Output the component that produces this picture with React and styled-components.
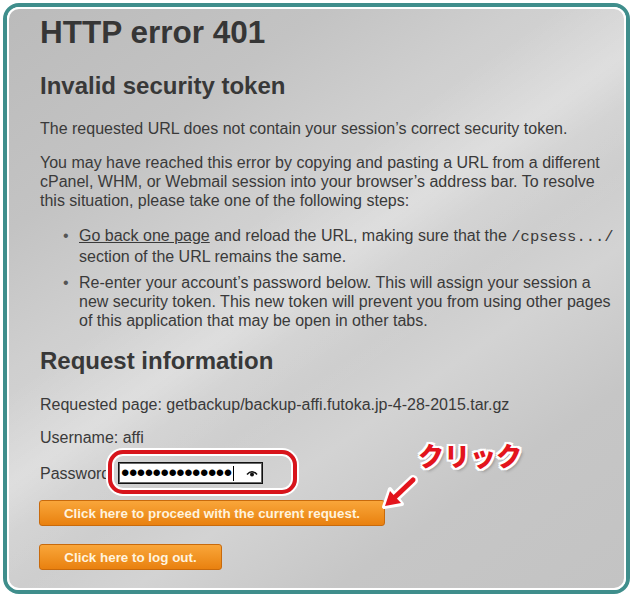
import React from 'react'
import styled, { createGlobalStyle } from 'styled-components';

const GlobalStyle = createGlobalStyle`
  body {
    margin: 0;
    background: #fff;
    font-family: "Liberation Sans", Arial, sans-serif;
  }
`;

const App = () => {
  return (
    <>
      <GlobalStyle />
      <Frame>
        <Panel>
          <Title>HTTP error 401</Title>
          <Heading $mt={21}>Invalid security token</Heading>
          <Text $mt={18}>The requested URL does not contain your session’s correct security token.</Text>
          <Text $mt={15}>
            You may have reached this error by copying and pasting a URL from a different
            cPanel, WHM, or Webmail session into your browser’s address bar. To resolve
            this situation, please take one of the following steps:
          </Text>
          <List>
            <Item>
              <Link href="#">Go back one page</Link> and reload the URL, making sure that the <Code>/cpsess.../</Code> section of the URL remains the same.
            </Item>
            <Item>
              Re-enter your account’s password below. This will assign your session a
              new security token. This new token will prevent you from using other pages
              of this application that may be open in other tabs.
            </Item>
          </List>
          <Heading $mt={16}>Request information</Heading>
          <Text $mt={19}>Requested page: getbackup/backup-affi.futoka.jp-4-28-2015.tar.gz</Text>
          <Text $mt={14}>Username: affi</Text>
          <PasswordRow>
            <Label>Password</Label>
            <InputWrap>
              <Input>
                <Dots>••••••••••••••</Dots>
                <Caret />
                <Eye viewBox="0 0 12 8" width="12" height="8">
                  <path d="M1 5.5 Q6 0 11 5.5" fill="none" stroke="#111" strokeWidth="1.6" />
                  <circle cx="6" cy="5.6" r="2" fill="#111" />
                </Eye>
              </Input>
              <Highlight />
            </InputWrap>
          </PasswordRow>
          <Button $mt={16} $width={346}>Click here to proceed with the current request.</Button>
          <Button $mt={18} $width={183}>Click here to log out.</Button>

          <Callout>クリック</Callout>
          <Arrow viewBox="0 0 42 42" width="42" height="42">
            <line x1="33" y1="8" x2="13" y2="27" stroke="#fff" strokeWidth="10" strokeLinecap="round" />
            <polygon points="4,35 22,32 10,17" fill="#fff" stroke="#fff" strokeWidth="4" strokeLinejoin="round" />
            <line x1="33" y1="8" x2="14" y2="26" stroke="#e3141c" strokeWidth="5" strokeLinecap="round" />
            <polygon points="5,34 21,31 10,19" fill="#e3141c" />
          </Arrow>
        </Panel>
      </Frame>
    </>
  )
}

export default App;

const Frame = styled.div`
  box-sizing: border-box;
  margin: 3px;
  width: 627px;
  height: 591px;
  border: 4px solid #3f8e8c;
  border-radius: 16px;
`;

const Panel = styled.div`
  position: relative;
  box-sizing: border-box;
  height: 100%;
  border: 2px solid #fff;
  border-radius: 12px;
  padding: 5px 6px 0 31px;
  color: #3a3a3a;
  background:
    linear-gradient(145deg, rgba(255,255,255,0) 38%, rgba(255,255,255,0.22) 47%, rgba(255,255,255,0.05) 52%, rgba(255,255,255,0) 62%),
    linear-gradient(145deg, #bbbbbb 0%, #c3c3c3 22%, #cfcfcf 36%, #d5d5d5 48%, #cdcdcd 58%, #d3d3d3 66%, #c6c6c6 80%, #c3c3c3 100%);
  overflow: hidden;
`;

const Title = styled.h1`
  margin: 0;
  font-size: 31.5px;
  line-height: 36px;
  font-weight: 700;
  color: #363636;
`;

const Heading = styled.h2`
  margin: ${p => p.$mt}px 0 0;
  font-size: 24px;
  line-height: 30px;
  font-weight: 700;
  color: #383838;
`;

const Text = styled.p`
  margin: ${p => p.$mt}px 0 0;
  font-size: 16px;
  line-height: 19px;
`;

const List = styled.ul`
  margin: 16px 0 0;
  padding: 0 0 0 39px;
  list-style: none;
  font-size: 16px;
  line-height: 19px;
`;

const Item = styled.li`
  & + & {
    margin-top: 7px;
  }
  &::before {
    content: "•";
    float: left;
    width: 16px;
    margin-left: -16px;
    color: #555;
  }
`;

const Link = styled.a`
  color: #3a3a3a;
  text-decoration: underline;
`;

const Code = styled.code`
  font-family: "Liberation Mono", "Courier New", monospace;
  font-size: 15.5px;
  line-height: 19px;
`;

const PasswordRow = styled.div`
  display: flex;
  align-items: center;
  margin-top: 15px;
  height: 22px;
`;

const Label = styled.span`
  width: 78px;
  font-size: 16px;
  line-height: 19px;
`;

const InputWrap = styled.div`
  position: relative;
`;

const Input = styled.div`
  box-sizing: border-box;
  display: flex;
  align-items: center;
  width: 145px;
  height: 22px;
  padding-left: 2px;
  background: #fff;
  border: 1px solid #111;
  box-shadow: inset 0 0 0 1px #666;
`;

const Dots = styled.span`
  font-family: "Liberation Sans", Arial, sans-serif;
  font-size: 24px;
  line-height: 20px;
  letter-spacing: -0.5px;
  color: #000;
`;

const Caret = styled.span`
  width: 1px;
  height: 15px;
  margin-left: 1px;
  background: #000;
`;

const Eye = styled.svg`
  margin-left: auto;
  margin-right: 4px;
`;

const Highlight = styled.div`
  position: absolute;
  top: -12px;
  left: -10px;
  right: -34px;
  bottom: -10px;
  border: 4px solid #d8141b;
  border-radius: 15px;
  box-shadow: 0 0 0 2px #fff, inset 0 0 0 2px #fff;
  pointer-events: none;
`;

const Button = styled.button`
  display: block;
  box-sizing: border-box;
  width: ${p => p.$width}px;
  height: 26px;
  margin-top: ${p => p.$mt}px;
  margin-left: -1px;
  padding: 0;
  border: 1px solid #c86a0c;
  border-radius: 3px;
  background: linear-gradient(#f9a63a, #e9810f);
  color: #fff3de;
  font-family: "Liberation Sans", Arial, sans-serif;
  font-size: 13.4px;
  font-weight: 700;
  cursor: pointer;
`;

const Callout = styled.div`
  position: absolute;
  left: 409px;
  top: 432px;
  font-family: "Noto Sans CJK JP", sans-serif;
  font-size: 26px;
  line-height: 28px;
  font-weight: 900;
  color: #e3141c;
  text-shadow:
    2px 0 0 #fff, -2px 0 0 #fff, 0 2px 0 #fff, 0 -2px 0 #fff,
    2px 2px 0 #fff, -2px -2px 0 #fff, 2px -2px 0 #fff, -2px 2px 0 #fff,
    3px 3px 3px rgba(0,0,0,0.25);
`;

const Arrow = styled.svg`
  position: absolute;
  left: 371px;
  top: 463px;
  overflow: visible;
`;
